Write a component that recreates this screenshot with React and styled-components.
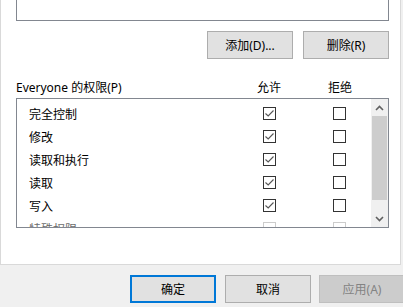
import React from 'react';
import styled, { createGlobalStyle } from 'styled-components';

const GlobalStyle = createGlobalStyle`
  html, body {
    margin: 0;
    padding: 0;
    overflow: hidden;
    background: #f0f0f0;
  }
  body {
    font-family: "Noto Sans", "Noto Sans CJK SC", sans-serif;
    font-size: 12px;
    color: #000;
  }
`;

// White tab page; its top edge is scrolled off the window
const Page = styled.div`
  width: 403px;
  height: 307px;
  overflow: hidden;
`;

const Panel = styled.div`
  background: #fff;
  border: 1px solid #d9d9d9;
  border-top: none;
  margin-right: 2px;
  padding: 0 11px 36px 15px;
`;

// Group / user list, only its lower edge shows
const UserList = styled.div`
  height: 20px;
  border: 1px solid #828790;
  border-top: none;
`;

const ButtonRow = styled.div`
  display: flex;
  justify-content: flex-end;
  gap: 10px;
  margin-top: 10px;
`;

const Button = styled.button`
  box-sizing: border-box;
  width: 86px;
  height: 28px;
  padding: 0;
  font-family: inherit;
  font-size: 12px;
  color: ${p => (p.disabled ? '#838383' : '#000')};
  background: ${p => (p.disabled ? '#cccccc' : '#e1e1e1')};
  border: ${p => (p.primary ? '2px solid #0078d7' : p.disabled ? '1px solid #bfbfbf' : '1px solid #adadad')};
  flex-shrink: 0;
`;

const HeaderRow = styled.div`
  display: grid;
  grid-template-columns: 1fr 34px 37px 34px 32px;
  align-items: center;
  height: 16px;
  margin-top: 19px;
`;

const HeaderCell = styled.span`
  text-align: ${p => (p.center ? 'center' : 'left')};
  white-space: nowrap;
`;

const PermList = styled.div`
  box-sizing: border-box;
  height: 130px;
  margin-top: 4px;
  border: 1px solid #828790;
  display: flex;
  overflow: hidden;
`;

const Rows = styled.div`
  flex: 1;
  padding: 3px 0 0 12px;
`;

const Row = styled.div`
  display: grid;
  grid-template-columns: 1fr 13px 57px 13px 25px;
  align-items: center;
  height: 23px;
  color: ${p => (p.faded ? '#6d6d6d' : '#000')};
`;

const Box = styled.span`
  box-sizing: border-box;
  width: 13px;
  height: 13px;
  border: 1px solid ${p => (p.faded ? '#cccccc' : '#333333')};
  background: #fff;
  display: flex;
  align-items: center;
  justify-content: center;
`;

const Scrollbar = styled.div`
  width: 17px;
  background: #f0f0f0;
  display: flex;
  flex-direction: column;
`;

const Arrow = styled.div`
  height: 17px;
  display: flex;
  align-items: center;
  justify-content: center;
`;

const Thumb = styled.div`
  height: 84px;
  margin: 0 1px;
  background: #cdcdcd;
`;

const Track = styled.div`
  flex: 1;
`;

const Footer = styled.div`
  display: flex;
  justify-content: flex-end;
  gap: 9px;
  margin-top: 10px;
  margin-right: -2px;
  & > :nth-child(2) { margin-right: -1px; }
`;

const Check = () => (
  <svg width="11" height="11" viewBox="0 0 11 11">
    <path d="M1.5 5.5 L4.2 8 L9.5 2.5" fill="none" stroke="#555" strokeWidth="1.1" />
  </svg>
);

const Chevron = ({ up }) => (
  <svg width="9" height="6" viewBox="0 0 9 6">
    <path
      d={up ? 'M1 5 L4.5 1.5 L8 5' : 'M1 1 L4.5 4.5 L8 1'}
      fill="none"
      stroke="#606060"
      strokeWidth="1.6"
    />
  </svg>
);

const permissions = [
  { name: '完全控制', allow: true },
  { name: '修改', allow: true },
  { name: '读取和执行', allow: true },
  { name: '读取', allow: true },
  { name: '写入', allow: true },
  { name: '特殊权限', allow: false, faded: true },
];

const App = () => {
  return (
    <Page>
      <GlobalStyle />
      <Panel>
        <UserList />
        <ButtonRow>
          <Button>添加(D)...</Button>
          <Button>删除(R)</Button>
        </ButtonRow>
        <HeaderRow>
          <HeaderCell>Everyone 的权限(P)</HeaderCell>
          <HeaderCell center>允许</HeaderCell>
          <span />
          <HeaderCell center>拒绝</HeaderCell>
          <span />
        </HeaderRow>
        <PermList>
          <Rows>
            {permissions.map(p => (
              <Row key={p.name} faded={p.faded}>
                <span>{p.name}</span>
                <Box faded={p.faded}>{p.allow && <Check />}</Box>
                <span />
                <Box faded={p.faded} />
                <span />
              </Row>
            ))}
          </Rows>
          <Scrollbar>
            <Arrow><Chevron up /></Arrow>
            <Thumb />
            <Track />
            <Arrow><Chevron /></Arrow>
          </Scrollbar>
        </PermList>
      </Panel>
      <Footer>
        <Button primary>确定</Button>
        <Button>取消</Button>
        <Button disabled>应用(A)</Button>
      </Footer>
    </Page>
  );
};

export default App;
